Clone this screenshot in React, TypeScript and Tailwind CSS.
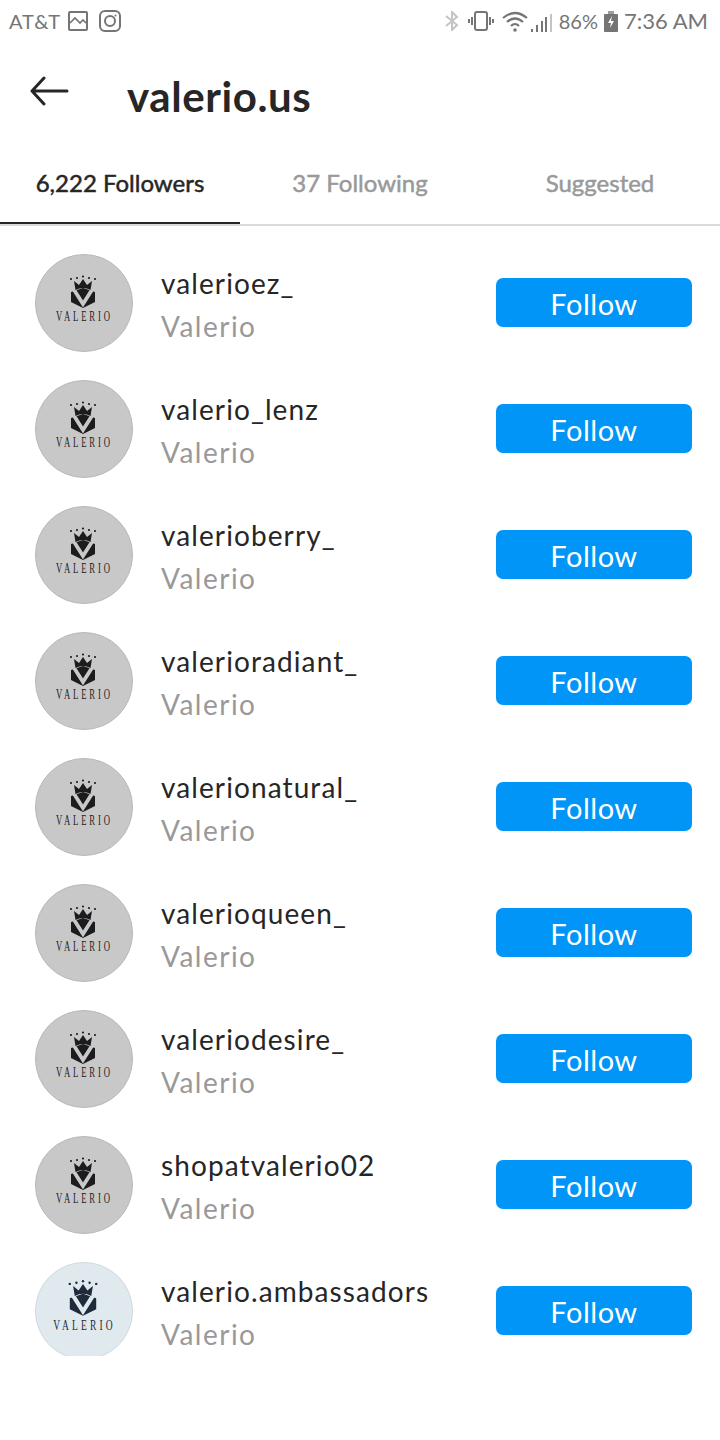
import React from "react";

const rows = [
  "valerioez_",
  "valerio_lenz",
  "valerioberry_",
  "valerioradiant_",
  "valerionatural_",
  "valerioqueen_",
  "valeriodesire_",
  "shopatvalerio02",
  "valerio.ambassadors",
];

function Avatar({ alt }: { alt?: boolean }) {
  const ink = alt ? "#1f2a3a" : "#1c1c1e";
  const bg = alt ? "#dfe9ee" : "#c8c8c8";
  return (
    <div className={`w-[98px] h-[98px] rounded-full shrink-0 overflow-hidden border ${alt ? "bg-[#dfe9ee] border-[#cfd9de]" : "bg-[#c8c8c8] border-[#b8b8b8]"}`}>
      <svg width="98" height="98" viewBox="0 0 98 98" className="block -translate-x-[1px] -translate-y-[1px]">
        <g transform={alt ? "translate(48 45) scale(1.1) translate(-48 -46)" : undefined}>
          <g fill={ink}>
            <circle cx="36" cy="25" r="1.100" />
            <circle cx="42" cy="24" r="1.100" />
            <circle cx="48" cy="22.500" r="1.100" />
            <circle cx="54" cy="24" r="1.100" />
            <circle cx="60" cy="25" r="1.100" />
            <path d="M48 34 L60 38 L60 48 L48 54 L36 48 L36 38 Z" />
          </g>
          <path d="M38.500 35 L48 50 L57.500 35" fill="none" stroke={bg} strokeWidth="3.800" />
          <path d="M39 27 L44 31 L48 25 L52 31 L57 27 L55.500 36 Q48 32 40.500 36 Z" fill={ink} />
          <text transform="translate(48 67) scale(0.62 1)" textAnchor="middle" textLength="87" lengthAdjust="spacing" fontFamily="'Liberation Serif', serif" fontSize="14" fill={ink}>VALERIO</text>
        </g>
      </svg>
    </div>
  );
}

function Row({ name, alt }: { name: string; alt?: boolean }) {
  return (
    <div className="flex items-center h-[98px] pl-[35px] pr-[28px]">
      <Avatar alt={alt} />
      <div className="ml-[28px] flex-1 min-w-0">
        <div className="text-[28px] leading-[42px] mt-[2px] text-[#262626] tracking-[1.1px]">{name}</div>
        <div className="text-[28px] leading-[42px] mt-[1px] text-[#999999] tracking-[1.5px]">Valerio</div>
      </div>
      <button className="w-[196px] h-[49px] -mt-[2px] rounded-[7px] bg-[#0095f6] text-white text-[29px] leading-[51px] text-center tracking-[0.5px]">Follow</button>
    </div>
  );
}

function StatusBar() {
  return (
    <div className="h-[42px] flex items-center justify-between pl-[9px] pr-[12px] text-[#757575]">
      <div className="flex items-center">
        <span className="text-[20px] leading-none tracking-[0.9px]">AT&amp;T</span>
        <svg width="20" height="20" viewBox="0 0 20 20" className="ml-[7px]" fill="none" stroke="#757575" strokeWidth="2">
          <rect x="1" y="1" width="18" height="18" rx="1" />
          <path d="M2 12 L7 7 L12 12 L15 9 L18 12" strokeWidth="1.700" />
        </svg>
        <svg width="22" height="22" viewBox="0 0 22 22" className="ml-[11px]" fill="none" stroke="#757575" strokeWidth="2">
          <rect x="1" y="1" width="20" height="20" rx="5" />
          <circle cx="11" cy="11" r="5" />
          <circle cx="16.500" cy="5.500" r="1" fill="#757575" stroke="none" />
        </svg>
      </div>
      <div className="flex items-center">
        <svg width="14" height="20" viewBox="0 0 14 20" fill="none" stroke="#c4c4c4" strokeWidth="2">
          <path d="M1 5 L12 14 L7 19 L7 1 L12 6 L1 15" />
        </svg>
        <svg width="26" height="20" viewBox="0 0 26 20" className="ml-[9px]" fill="none" stroke="#757575" strokeWidth="2">
          <rect x="7" y="1" width="12" height="18" rx="2" />
          <path d="M4 6 V14 M1 8 V12 M22 6 V14 M25 8 V12" />
        </svg>
        <svg width="26" height="21" viewBox="0 0 26 21" className="ml-[8px]" fill="none" stroke="#757575" strokeWidth="2.200">
          <path d="M1 7 Q13 -3 25 7" />
          <path d="M5 11 Q13 4 21 11" />
          <path d="M9 15 Q13 11 17 15" />
          <circle cx="13" cy="19" r="1.800" fill="#757575" stroke="none" />
        </svg>
        <svg width="21" height="18" viewBox="0 0 21 18" className="ml-[3px] mt-[3px]">
          <rect x="0" y="15" width="2" height="3" fill="#757575" />
          <rect x="5" y="11" width="2" height="7" fill="#757575" />
          <rect x="10" y="7" width="2" height="11" fill="#757575" />
          <rect x="14" y="3" width="2" height="15" fill="#757575" />
          <rect x="19" y="0" width="2" height="18" fill="#c4c4c4" />
        </svg>
        <span className="ml-[7px] text-[20px] leading-none">86%</span>
        <svg width="14" height="21" viewBox="0 0 14 21" className="ml-[6px]">
          <rect x="4" y="0" width="6" height="3" fill="#9e9e9e" />
          <rect x="0" y="3" width="14" height="18" rx="1" fill="#757575" />
          <path d="M8 5 L4 12 L7 12 L6 17 L10 10 L7 10 Z" fill="#ffffff" />
        </svg>
        <span className="ml-[6px] text-[22px] leading-none">7:36 AM</span>
      </div>
    </div>
  );
}

export default function App() {
  return (
    <div className="w-[720px] h-[1440px] bg-white overflow-hidden font-['Lato','Noto_Sans',sans-serif]">
      <StatusBar />
      <div className="h-[98px] flex items-center pl-[30px]">
        <svg width="40" height="32" viewBox="0 0 40 32" fill="none" stroke="#262626" strokeWidth="3" strokeLinecap="round" strokeLinejoin="round" className="-mt-[1px]">
          <path d="M37 16 H2 M14 3 L2 16 L14 29" />
        </svg>
        <div className="ml-[57px] mt-[10px] text-[42px] leading-none font-bold text-[#262626] tracking-[0.6px]">valerio.us</div>
      </div>
      <div className="flex h-[86px] border-b-2 border-[#dbdbdb] text-[24px]">
        <div className="relative w-[240px] flex items-center justify-center text-[#262626] [-webkit-text-stroke:0.5px_#262626] pt-[2px]">
          6,222 Followers
          <div className="absolute left-0 right-0 bottom-0 h-[2px] bg-[#262626]" />
        </div>
        <div className="w-[240px] flex items-center justify-center text-[#999999] [-webkit-text-stroke:0.5px_#999999] pt-[2px]">37 Following</div>
        <div className="w-[240px] flex items-center justify-center text-[#999999] [-webkit-text-stroke:0.5px_#999999] pt-[2px]">Suggested</div>
      </div>
      <div className="h-[1130px] overflow-hidden pt-[28px] flex flex-col gap-[28px]">
        {rows.map((r, i) => (
          <Row key={r} name={r} alt={i === 8} />
        ))}
      </div>
    </div>
  );
}
